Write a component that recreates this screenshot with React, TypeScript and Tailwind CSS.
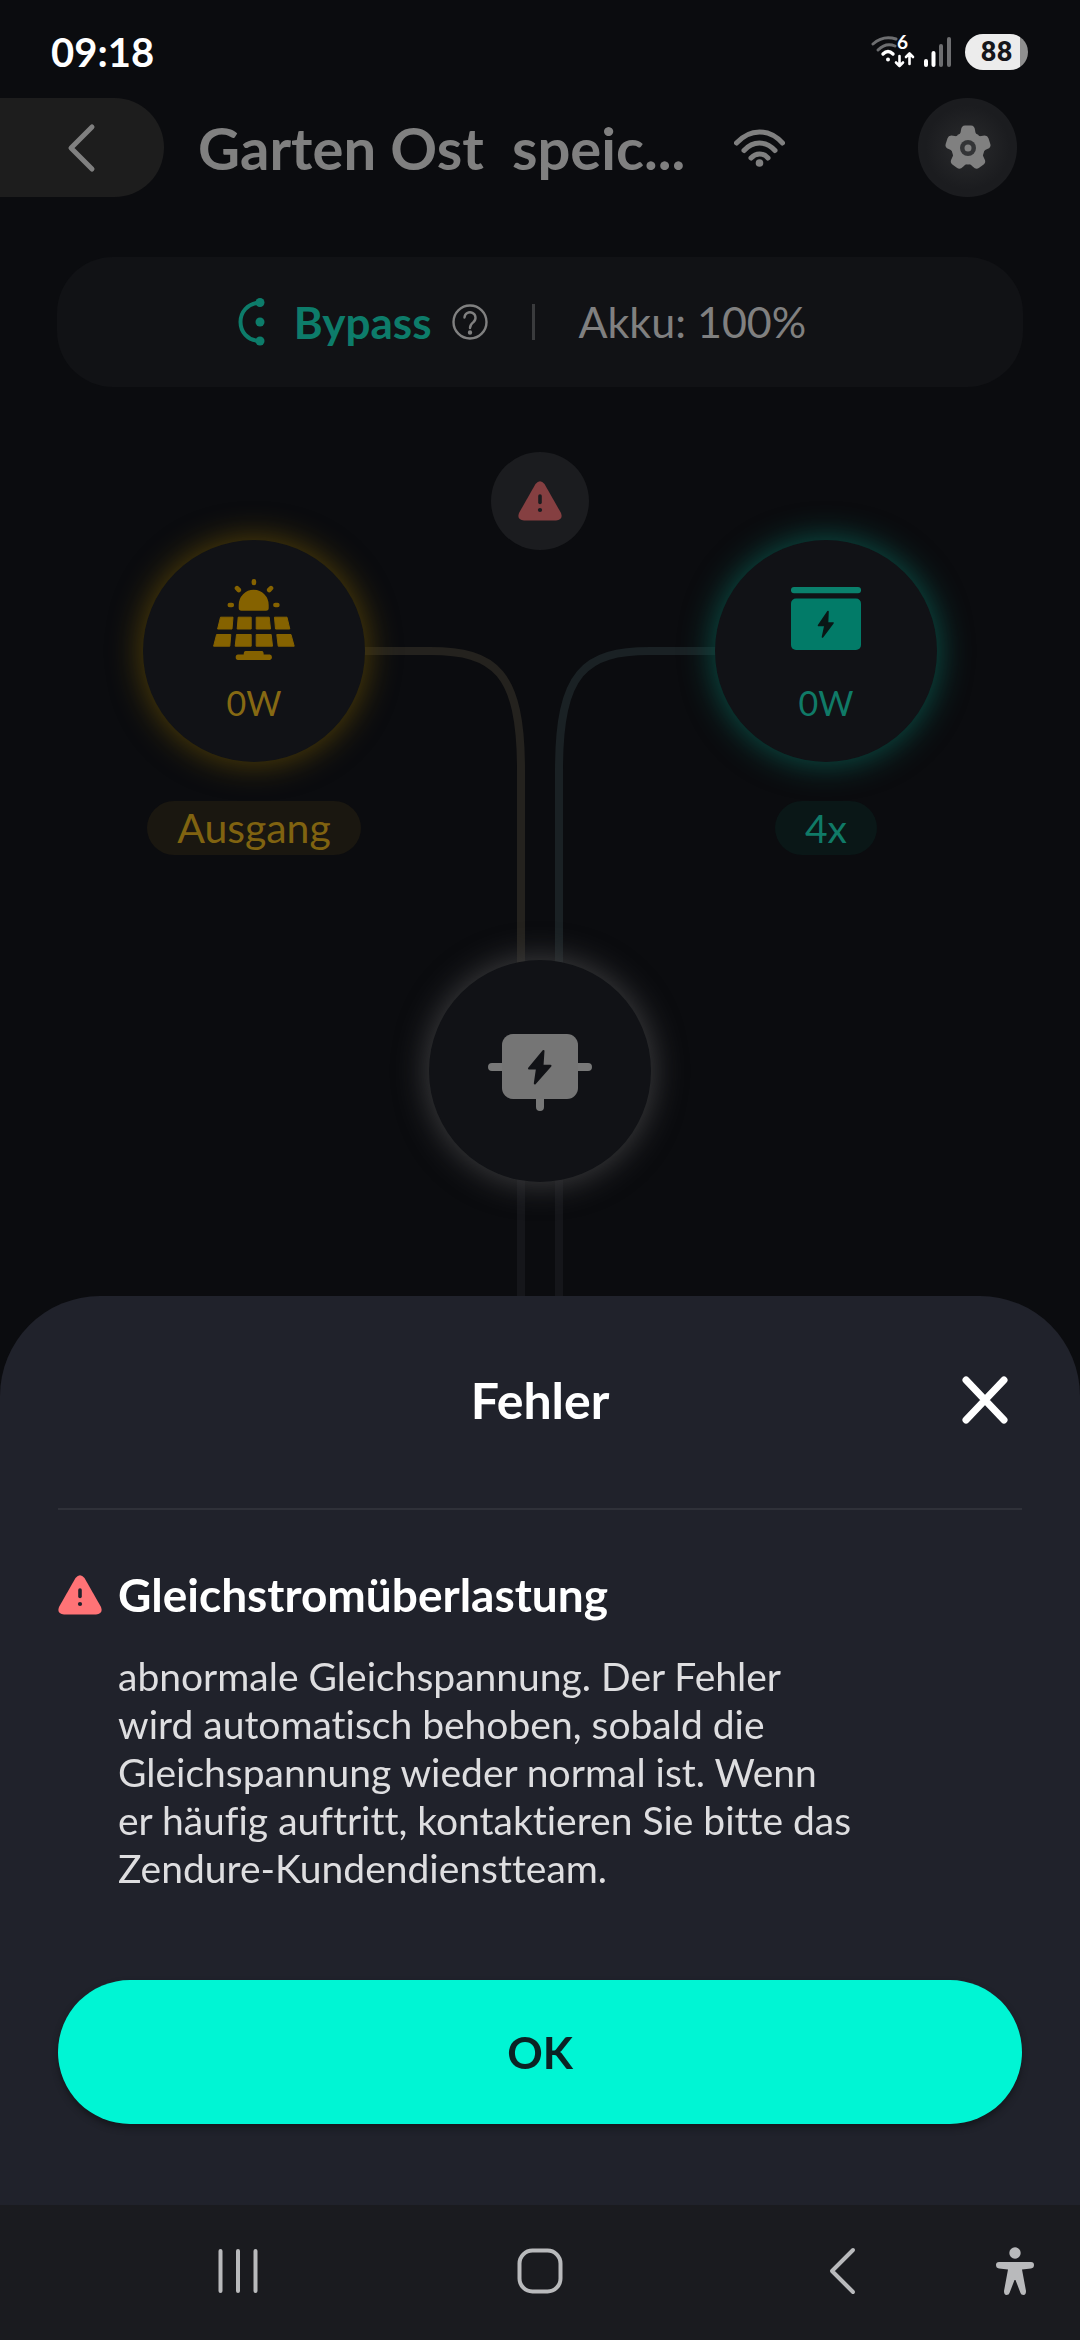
import type { ReactNode } from "react";

function StatusWifi() {
  return (
    <svg viewBox="0 -10 44 54" className="h-[54px] w-[44px]" fill="none" strokeLinecap="round" aria-hidden="true">
      <g stroke="#6d6e70" strokeWidth="3">
        <path d="M2 9Q12 0 25 4" />
        <path d="M7 15Q15 7 24 11" />
      </g>
      <path d="M12 19Q17 14 22 19" stroke="#fff" strokeWidth="3.4" />
      <circle cx="17" cy="24.500" r="2" fill="#fff" />
      <text x="26" y="14" fill="#fff" fontFamily="Lato, sans-serif" fontWeight="700" fontSize="19">6</text>
      <path d="M28.500 21v10M25 27.500l3.500 3.500 3.500-3.500M38.500 29V19M35 22l3.500-3.500L42 22" stroke="#fff" strokeWidth="2.600" strokeLinejoin="round" />
    </svg>
  );
}

function Signal() {
  return (
    <svg viewBox="0 0 27 30" className="h-[30px] w-[27px]" aria-hidden="true">
      <rect x="0" y="22" width="4" height="8" rx="2" fill="#fff" />
      <rect x="7.500" y="14" width="4" height="16" rx="2" fill="#fff" />
      <rect x="15" y="7" width="4" height="23" rx="2" fill="#6d6e70" />
      <rect x="23" y="0" width="4" height="30" rx="2" fill="#6d6e70" />
    </svg>
  );
}

function WifiIcon() {
  return (
    <svg viewBox="0 0 51 38" className="h-[38px] w-[51px] shrink-0" fill="none" stroke="#808080" strokeWidth="5" strokeLinecap="round" role="img" aria-label="WLAN">
      <path d="M2.500 14C16-.8 35-.8 48.500 14" />
      <path d="M10 21.500C19 11.500 32 11.500 41 21.500" />
      <path d="M17 29C22 23.500 29 23.500 34 29" />
      <circle cx="25.500" cy="34" r="3.800" fill="#808080" stroke="none" />
    </svg>
  );
}

function Gear() {
  return (
    <svg viewBox="-24 -24 48 48" className="h-[48px] w-[48px]" aria-hidden="true">
      <g fill="#808080">
        <circle r="16.500" />
        {[0, 72, 144, 216, 288].map((a) => (
          <path key={a} transform={`rotate(${a})`} d="M-10-12Q-7.500-13-7-18Q-6.500-22.500-3-22.500H3Q6.500-22.500 7-18Q7.500-13 10-12V0H-10Z" />
        ))}
      </g>
      <circle r="8" fill="#333436" />
      <circle r="3.500" fill="#808080" />
    </svg>
  );
}

function Warning({ fill, mark }: { fill: string; mark: string }) {
  return (
    <svg viewBox="0 0 44 40" className="h-[40px] w-[44px] shrink-0" aria-hidden="true">
      <path d="M17.500 3Q22-2.500 26.500 3L43 32Q45.500 39 38 39.500H6Q-1.500 39 1 32Z" fill={fill} />
      <path d="M22 15v6.500" stroke={mark} strokeWidth="3.600" strokeLinecap="round" />
      <circle cx="22" cy="29" r="2.100" fill={mark} />
    </svg>
  );
}

function Solar() {
  return (
    <svg viewBox="0 0 82 82" className="h-[82px] w-[82px]" fill="#856200" aria-hidden="true">
      <path d="M25.700 26a15 15.200 0 0 1 30 0V29Q55.700 31.700 53 31.700H28.400Q25.700 31.700 25.700 29Z" />
      <g stroke="#856200" strokeWidth="4.600" strokeLinecap="round">
        <path d="M40.900 2.300V4M16.800 26h2M62.400 26h2M24 9.200l1.800 1.800M58 9.200l-1.800 1.800" />
      </g>
      <g stroke="#856200" strokeWidth="1" strokeLinejoin="round">
        <path d="M7.500 38.200H20L19 50H4.600ZM25.200 38.200H38.200V50H24.200ZM43.200 38.200H56.200L57.500 50H43.200ZM61.500 38.200H74L76.800 50H62.500Z" />
        <path d="M3.600 55.500H17.800L16.800 67.200H.6ZM23.500 55.500H38.200V67.200H22.200ZM43.200 55.500H58.200L59.500 67.200H43.200ZM63.800 55.500H78L81.200 67.200H65.200Z" />
      </g>
      <path d="M32.500 72H49Q50.700 72 50.700 75.600H57Q59 76 59 78.300T57 81H25Q22.700 81 22.700 78.300T25 75.600H30.700Q30.700 72 32.500 72Z" />
    </svg>
  );
}

function Battery() {
  return (
    <svg viewBox="0 0 70 63" className="h-[63px] w-[70px]" aria-hidden="true">
      <rect width="70" height="6.300" rx="3" fill="#0a806c" />
      <rect y="11.600" width="70" height="51.400" rx="5" fill="#027b68" />
      <path d="M37 24.500L27.500 38.500H34L31.500 50L42 36H36.500Z" fill="#0a1716" stroke="#0a1716" strokeWidth="1.600" strokeLinejoin="round" />
    </svg>
  );
}

function Hub() {
  return (
    <svg viewBox="0 0 104 78" className="h-[78px] w-[104px]" aria-hidden="true">
      <path d="M4 33H100M52 60V73" stroke="#787878" strokeWidth="8" strokeLinecap="round" />
      <rect x="14" width="76" height="65" rx="11" fill="#757575" />
      <path d="M55.500 17L41 34.500H49L46.800 49.500L62.500 31.800H54.500Z" fill="#111216" stroke="#111216" strokeWidth="2" strokeLinejoin="round" />
    </svg>
  );
}

function Node({ glow, children }: { glow: string; children: ReactNode }) {
  return (
    <div className={`flex h-[222px] w-[222px] flex-col items-center rounded-full bg-[#111216] ${glow}`}>
      {children}
    </div>
  );
}

function Flow() {
  return (
    <svg viewBox="0 0 1080 900" className="absolute top-0 left-1/2 h-[900px] w-[1080px] -translate-x-1/2" fill="none" strokeWidth="8" aria-hidden="true">
      <path d="M350 199H430C495 199 521 220 521 318V520" stroke="#24221e" />
      <path d="M730 199H650C585 199 559 220 559 318V520" stroke="#1a2124" />
      <path d="M521 700V900M559 700V900" stroke="#15161a" />
    </svg>
  );
}

export default function App() {
  return (
    <div className="flex min-h-screen flex-col bg-[#0b0c0f] font-[Lato,sans-serif]">
      <div className="flex h-[98px] items-center justify-between pt-1.5 pr-[52px] pl-[51px] text-white">
        <span className="text-[40px] leading-none font-bold">09:18</span>
        <div className="flex items-center">
          <StatusWifi />
          <div className="ml-[9px]"><Signal /></div>
          <div className="ml-[14px] flex h-9 w-[63px] items-center justify-center rounded-full bg-linear-to-r from-[#ececec] from-87% to-[#8f8f8f] to-87% font-[Roboto,sans-serif] text-[28px] leading-none font-bold text-[#15161a]">88</div>
        </div>
      </div>

      <header className="flex h-[99px] items-center pr-[63px]">
        <button type="button" aria-label="Zurück" className="flex h-full w-[164px] items-center rounded-r-full bg-[#1d1d1d] pl-[66px]">
          <svg viewBox="0 0 30 50" className="h-[50px] w-[30px]" fill="none" stroke="#808080" strokeWidth="5" strokeLinecap="round" strokeLinejoin="round" aria-hidden="true">
            <path d="M26 4L5 25L26 46" />
          </svg>
        </button>
        <h1 className="ml-[34px] w-[536px] text-[58px] leading-none font-bold whitespace-pre text-[#808080]">Garten Ost  speic...</h1>
        <WifiIcon />
        <button type="button" aria-label="Einstellungen" className="ml-auto flex h-[99px] w-[99px] items-center justify-center rounded-full bg-radial from-[#2a2b2d] to-[#1b1c1f] to-60%">
          <Gear />
        </button>
      </header>

      <section className="mx-[57px] mt-[60px] flex h-[130px] items-center justify-center rounded-[56px] bg-[#111215] pr-9">
        <svg viewBox="0 0 28 48" className="h-[48px] w-[28px]" fill="#0d7c6a" aria-hidden="true">
          <path d="M22 4.500C-4 6-4 42 22 43" fill="none" stroke="#0d7c6a" strokeWidth="4" />
          <circle cx="22" cy="4.500" r="4.500" />
          <circle cx="22" cy="24" r="4.500" />
          <circle cx="22" cy="43" r="4.500" />
        </svg>
        <span className="ml-7 text-[44px] font-bold text-[#0d7c6a]">Bypass</span>
        <button type="button" aria-label="Hilfe" className="ml-5">
          <svg viewBox="0 0 36 36" className="h-9 w-9" fill="none" stroke="#808080" strokeWidth="2.400" strokeLinecap="round" aria-hidden="true">
            <circle cx="18" cy="18" r="16.500" />
            <path d="M12.500 13.500a5.500 5.500 0 1 1 9 4.500c-2.500 2-3.500 2.600-3.500 6" />
            <circle cx="18" cy="28.500" r="1" fill="#808080" />
          </svg>
        </button>
        <span className="ml-11 h-9 w-[3px] bg-[#3a3b3d]" />
        <span className="ml-11 text-[43px] text-[#808080]">Akku: 100%</span>
      </section>

      <main className="relative mt-[65px] h-[900px]">
        <Flow />
        <div className="relative flex items-start justify-center gap-[126px]">
          <div className="mt-[88px] flex w-[222px] flex-col items-center">
            <Node glow="shadow-[0_0_30px_4px_#4a3a08]">
              <div className="mt-[39px]"><Solar /></div>
              <span className="mt-6 text-[34px] leading-[36px] text-[#866913]">0W</span>
            </Node>
            <span className="mt-[39px] flex h-[54px] items-center rounded-full bg-[#1a1710] px-[30px] text-[41px] text-[#806310]">Ausgang</span>
          </div>
          <button type="button" aria-label="Fehler anzeigen" className="flex h-[98px] w-[98px] items-center justify-center rounded-full bg-[#1b1c1f]">
            <Warning fill="#853f41" mark="#1b1c1f" />
          </button>
          <div className="mt-[88px] flex w-[222px] flex-col items-center">
            <Node glow="shadow-[0_0_30px_4px_#0a4a42]">
              <div className="mt-[47px]"><Battery /></div>
              <span className="mt-[35px] text-[34px] leading-[36px] text-[#107a67]">0W</span>
            </Node>
            <span className="mt-[39px] flex h-[54px] items-center rounded-full bg-[#0a1717] px-[30px] text-[39px] text-[#107a67]">4x</span>
          </div>
        </div>
        <div className="relative mt-[105px] flex justify-center">
          <Node glow="shadow-[0_0_30px_4px_#3a3a3c]">
            <div className="mt-[74px]"><Hub /></div>
          </Node>
        </div>
      </main>

      <div className="fixed inset-x-0 bottom-0 flex flex-col">
        <div role="dialog" aria-modal="true" aria-labelledby="sheet-title" className="flex flex-col rounded-t-[100px] bg-[#20222b] px-[58px] pb-[81px]">
          <div className="relative flex h-[214px] items-center justify-center border-b-2 border-[#2f3139] pb-1">
            <h2 id="sheet-title" className="text-[50px] leading-none font-bold text-white">Fehler</h2>
            <button type="button" aria-label="Schließen" className="absolute right-[12px]">
              <svg viewBox="0 0 50 50" className="h-[50px] w-[50px]" fill="none" stroke="#fff" strokeWidth="7" strokeLinecap="round" aria-hidden="true">
                <path d="M6 5L44 45M44 5L6 45" />
              </svg>
            </button>
          </div>
          <div className="mt-[57px] flex items-center gap-4">
            <Warning fill="#ff7376" mark="#20222b" />
            <h3 className="text-[46px] leading-[56px] font-bold text-white">Gleichstromüberlastung</h3>
          </div>
          <p className="mt-[29px] ml-[60px] w-[740px] text-[39px] leading-[48px] text-[#dedee0] [font-variant-ligatures:none]">
            abnormale Gleichspannung. Der Fehler wird automatisch behoben, sobald die Gleichspannung wieder normal ist. Wenn er häufig auftritt, kontaktieren Sie bitte das Zendure-Kundendienstteam.
          </p>
          <button type="button" className="mt-[88px] h-36 rounded-full bg-[#00f5d4] text-[44px] font-bold text-[#0b2224] shadow-[0_4px_6px_#15171c]">OK</button>
        </div>
        <nav className="flex h-[135px] items-center bg-[#1a1b1f] pb-1">
          <button type="button" aria-label="Letzte Apps" className="ml-[12%] flex w-[20%] justify-center">
            <svg viewBox="0 0 40 46" className="h-[46px] w-[40px]" stroke="#b9babc" strokeWidth="4" strokeLinecap="round" aria-hidden="true">
              <path d="M2.500 3V43M20 3V43M37.500 3V43" />
            </svg>
          </button>
          <button type="button" aria-label="Startbildschirm" className="ml-[8%] flex w-[20%] justify-center">
            <svg viewBox="0 0 46 46" className="h-[46px] w-[46px]" fill="none" stroke="#b9babc" strokeWidth="4" aria-hidden="true">
              <rect x="2.500" y="2.500" width="41" height="41" rx="13" />
            </svg>
          </button>
          <button type="button" aria-label="Zurück" className="ml-[8%] flex w-[20%] justify-center">
            <svg viewBox="0 0 28 48" className="h-[48px] w-[28px]" fill="none" stroke="#b9babc" strokeWidth="4" strokeLinecap="round" strokeLinejoin="round" aria-hidden="true">
              <path d="M25 3L4 24L25 45" />
            </svg>
          </button>
          <button type="button" aria-label="Bedienungshilfen" className="flex flex-1 justify-center">
            <svg viewBox="0 0 40 50" className="h-[50px] w-[40px]" fill="#b9babc" aria-hidden="true">
              <circle cx="20" cy="7" r="5.700" />
              <path d="M4 16H36Q39 16 39 19T36 22.500L27 23.500L31 45Q31 49 28.500 49T25.500 47L20.500 34H19.500L14.500 47Q14 49 11.500 49T9 45L13 23.500L4 22.500Q1 22 1 19T4 16Z" />
            </svg>
          </button>
        </nav>
      </div>
    </div>
  );
}
